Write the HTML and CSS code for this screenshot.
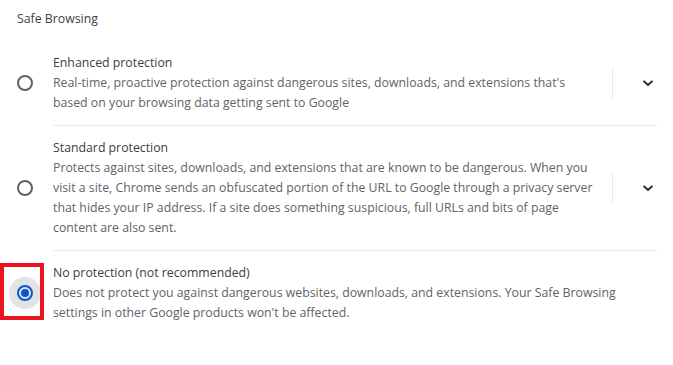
FILE: index.html
```html
<!DOCTYPE html>
<html>
<head>
<meta charset="utf-8">
<link rel="stylesheet" href="styles.css">
</head>
<body>
<div class="page">
  <div class="title">Safe Browsing</div>
  <div class="list">
    <div class="row">
      <div class="radio-cell"><span class="radio"></span></div>
      <div class="content">
        <div class="text">
          <div class="label">Enhanced protection</div>
          <div class="desc">Real-time, proactive protection against dangerous sites, downloads, and extensions that's based on your browsing data getting sent to Google</div>
        </div>
        <div class="expand">
          <span class="vsep"></span>
          <span class="chev"><svg width="12" height="8" viewBox="0 0 12 8"><path d="M1.5 1.8 L6 6 L10.5 1.8" fill="none" stroke="#202124" stroke-width="1.8"/></svg></span>
        </div>
      </div>
    </div>
    <div class="row">
      <div class="radio-cell"><span class="radio"></span></div>
      <div class="content bordered">
        <div class="text">
          <div class="label">Standard protection</div>
          <div class="desc">Protects against sites, downloads, and extensions that are known to be dangerous. When you visit a site, Chrome sends an obfuscated portion of the URL to Google through a privacy server that hides your IP address. If a site does something suspicious, full URLs and bits of page content are also sent.</div>
        </div>
        <div class="expand">
          <span class="vsep"></span>
          <span class="chev"><svg width="12" height="8" viewBox="0 0 12 8"><path d="M1.5 1.8 L6 6 L10.5 1.8" fill="none" stroke="#202124" stroke-width="1.8"/></svg></span>
        </div>
      </div>
    </div>
    <div class="row">
      <div class="radio-cell"><span class="ripple"></span><span class="radio checked"></span><span class="highlight"></span></div>
      <div class="content bordered">
        <div class="text">
          <div class="label">No protection (not recommended)</div>
          <div class="desc">Does not protect you against dangerous websites, downloads, and extensions. Your Safe Browsing settings in other Google products won't be affected.</div>
        </div>
      </div>
    </div>
  </div>
</div>
</body>
</html>
```

FILE: styles.css
```css
html, body {
  margin: 0;
  padding: 0;
  background: #ffffff;
}
body {
  font-family: "Open Sans", "Noto Sans", sans-serif;
  font-size: 12.3px;
  line-height: 20px;
  color: #5f6368;
}
.page {
  padding: 9px 0 0 17px;
  width: 640px;
}
.title {
  color: #3c4043;
  font-weight: 500;
  height: 20px;
  margin-bottom: 12px;
}
.list {
  display: flex;
  flex-direction: column;
}
.row {
  display: flex;
  align-items: stretch;
}
.radio-cell {
  position: relative;
  width: 36px;
  flex: none;
  display: flex;
  align-items: center;
}
.radio {
  position: relative;
  z-index: 1;
  box-sizing: border-box;
  width: 16px;
  height: 16px;
  border-radius: 50%;
  border: 2px solid #5f6368;
  display: block;
}
.radio.checked {
  border-color: #0b57d0;
}
.radio.checked::after {
  content: "";
  position: absolute;
  left: 2px;
  top: 2px;
  width: 8px;
  height: 8px;
  border-radius: 50%;
  background: #0b57d0;
}
.ripple {
  position: absolute;
  left: -8px;
  top: 50%;
  margin-top: -16px;
  width: 32px;
  height: 32px;
  border-radius: 50%;
  background: #e3e3e3;
}
.highlight {
  position: absolute;
  left: -17px;
  top: 13px;
  width: 36px;
  height: 49px;
  border: 4px solid #e8141f;
}
.content {
  flex: 1;
  display: flex;
  align-items: center;
  padding: 12px 0;
}
.content.bordered {
  border-top: 1px solid #e8eaed;
}
.text {
  flex: 1;
}
.label {
  color: #3c4043;
}
.desc {
  color: #5f6368;
}
.expand {
  flex: none;
  width: 45px;
  display: flex;
  align-items: center;
  margin-left: 12px;
}
.vsep {
  width: 1px;
  height: 32px;
  background: #e8eaed;
}
.chev {
  display: flex;
  margin-left: 29px;
}
```
